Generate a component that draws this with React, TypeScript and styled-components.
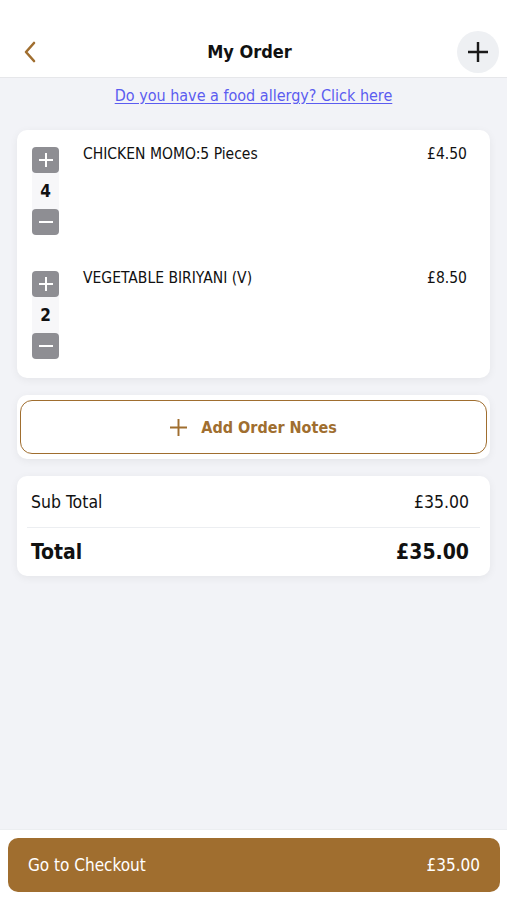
import React from 'react';
import styled, { createGlobalStyle } from 'styled-components';

const gold = '#a06e2f';
const font = `"DejaVu Sans Condensed", "Liberation Sans Narrow", "Noto Sans", sans-serif`;

const Global = createGlobalStyle`
  html, body {
    margin: 0;
    padding: 0;
    background: #f2f3f7;
  }
  body {
    font-family: ${font};
    color: #111;
  }
`;

type Item = { qty: number; name: string; price: string };

const items: Item[] = [
  { qty: 4, name: 'CHICKEN MOMO:5 Pieces', price: '£4.50' },
  { qty: 2, name: 'VEGETABLE BIRIYANI (V)', price: '£8.50' },
];

const Page = styled.div`
  width: 507px;
  height: 900px;
  display: flex;
  flex-direction: column;
  background: #f2f3f7;
`;

const Header = styled.header`
  height: 78px;
  box-sizing: border-box;
  padding: 26px 8px 0 18px;
  display: flex;
  align-items: center;
  justify-content: space-between;
  background: #fff;
  border-bottom: 1px solid #e6e7ea;
`;

const Title = styled.h1`
  margin: 0;
  font-size: 18px;
  font-weight: 600;
`;

const BackButton = styled.button`
  width: 24px;
  height: 24px;
  padding: 0;
  border: 0;
  background: none;
  display: flex;
  align-items: center;
  justify-content: center;
`;

const CircleButton = styled.button`
  width: 42px;
  height: 42px;
  border-radius: 50%;
  border: 0;
  padding: 0;
  background: #eef0f3;
  display: flex;
  align-items: center;
  justify-content: center;
`;

const Body = styled.main`
  flex: 1;
  padding: 0 17px;
  display: flex;
  flex-direction: column;
`;

const AllergyLink = styled.a`
  display: block;
  text-align: center;
  margin: 8px 0 25px;
  font-size: 16px;
  color: #5b5cf0;
  text-decoration: underline;
  text-underline-offset: 2px;
`;

const Card = styled.section<{ $pad?: string }>`
  background: #fff;
  border-radius: 10px;
  box-shadow: 0 2px 8px rgba(0, 0, 0, 0.06);
  padding: ${({ $pad }) => $pad || '0'};
  margin-bottom: 17px;
`;

const ItemList = styled.div`
  display: flex;
  flex-direction: column;
  gap: 36px;
`;

const ItemRow = styled.div`
  display: flex;
  align-items: flex-start;
  padding: 0 23px 0 15px;
`;

const Stepper = styled.div`
  width: 27px;
  display: flex;
  flex-direction: column;
  align-items: center;
  background: #f7f7f9;
  border-radius: 5px;
`;

const StepButton = styled.div`
  width: 27px;
  height: 26px;
  border-radius: 4px;
  background: #8e8e93;
  display: flex;
  align-items: center;
  justify-content: center;
`;

const Qty = styled.div`
  height: 36px;
  line-height: 36px;
  font-size: 17px;
  font-weight: 600;
`;

const ItemName = styled.div`
  flex: 1;
  margin-left: 24px;
  margin-top: -2px;
  font-size: 15.5px;
`;

const ItemPrice = styled.div`
  margin-top: -2px;
  font-size: 15.5px;
`;

const NotesButton = styled.button`
  width: 100%;
  height: 54px;
  border: 1.5px solid ${gold};
  border-radius: 12px;
  background: #fff;
  color: ${gold};
  font-family: ${font};
  font-size: 16px;
  font-weight: 600;
  display: flex;
  align-items: center;
  justify-content: center;
  gap: 14px;
`;

const TotalRow = styled.div<{ $big?: boolean }>`
  display: flex;
  justify-content: space-between;
  align-items: center;
  padding: 0 21px 0 14px;
  height: ${({ $big }) => ($big ? '48px' : '51px')};
  font-size: ${({ $big }) => ($big ? '21px' : '17.5px')};
  font-weight: ${({ $big }) => ($big ? 700 : 400)};
`;

const Divider = styled.div`
  height: 1px;
  margin: 0 10px;
  background: #eceef1;
`;

const Footer = styled.footer`
  height: 71px;
  box-sizing: border-box;
  padding: 8px 7px 9px 8px;
  background: #fff;
  border-top: 1px solid #eceef1;
`;

const CheckoutButton = styled.button`
  width: 100%;
  height: 54px;
  border: 0;
  border-radius: 10px;
  background: ${gold};
  color: #fff;
  font-family: ${font};
  font-size: 17px;
  padding: 0 20px;
  display: flex;
  align-items: center;
  justify-content: space-between;
`;

function Plus({ size = 14, color = '#fff', w = 2 }: { size?: number; color?: string; w?: number }) {
  return (
    <svg width={size} height={size} viewBox="0 0 14 14">
      <path d="M7 0v14M0 7h14" stroke={color} strokeWidth={w} fill="none" />
    </svg>
  );
}

function Minus() {
  return (
    <svg width={14} height={14} viewBox="0 0 14 14">
      <path d="M0 7h14" stroke="#fff" strokeWidth={2} fill="none" />
    </svg>
  );
}

export default function App() {
  return (
    <Page>
      <Global />
      <Header>
        <BackButton aria-label="Back">
          <svg width="14" height="22" viewBox="0 0 14 22">
            <path d="M11 2L3 11l8 9" stroke={gold} strokeWidth="2.6" fill="none" strokeLinecap="round" strokeLinejoin="round" />
          </svg>
        </BackButton>
        <Title>My Order</Title>
        <CircleButton aria-label="Add">
          <Plus size={20} color="#1a1a1a" w={1.7} />
        </CircleButton>
      </Header>
      <Body>
        <AllergyLink href="#">Do you have a food allergy? Click here</AllergyLink>
        <Card $pad="17px 0 19px">
          <ItemList>
            {items.map((item) => (
              <ItemRow key={item.name}>
                <Stepper>
                  <StepButton>
                    <Plus />
                  </StepButton>
                  <Qty>{item.qty}</Qty>
                  <StepButton>
                    <Minus />
                  </StepButton>
                </Stepper>
                <ItemName>{item.name}</ItemName>
                <ItemPrice>{item.price}</ItemPrice>
              </ItemRow>
            ))}
          </ItemList>
        </Card>
        <Card $pad="5px 3px">
          <NotesButton>
            <Plus size={17} color={gold} w={1.6} />
            Add Order Notes
          </NotesButton>
        </Card>
        <Card>
          <TotalRow>
            <span>Sub Total</span>
            <span>£35.00</span>
          </TotalRow>
          <Divider />
          <TotalRow $big>
            <span>Total</span>
            <span>£35.00</span>
          </TotalRow>
        </Card>
      </Body>
      <Footer>
        <CheckoutButton>
          <span>Go to Checkout</span>
          <span>£35.00</span>
        </CheckoutButton>
      </Footer>
    </Page>
  );
}
